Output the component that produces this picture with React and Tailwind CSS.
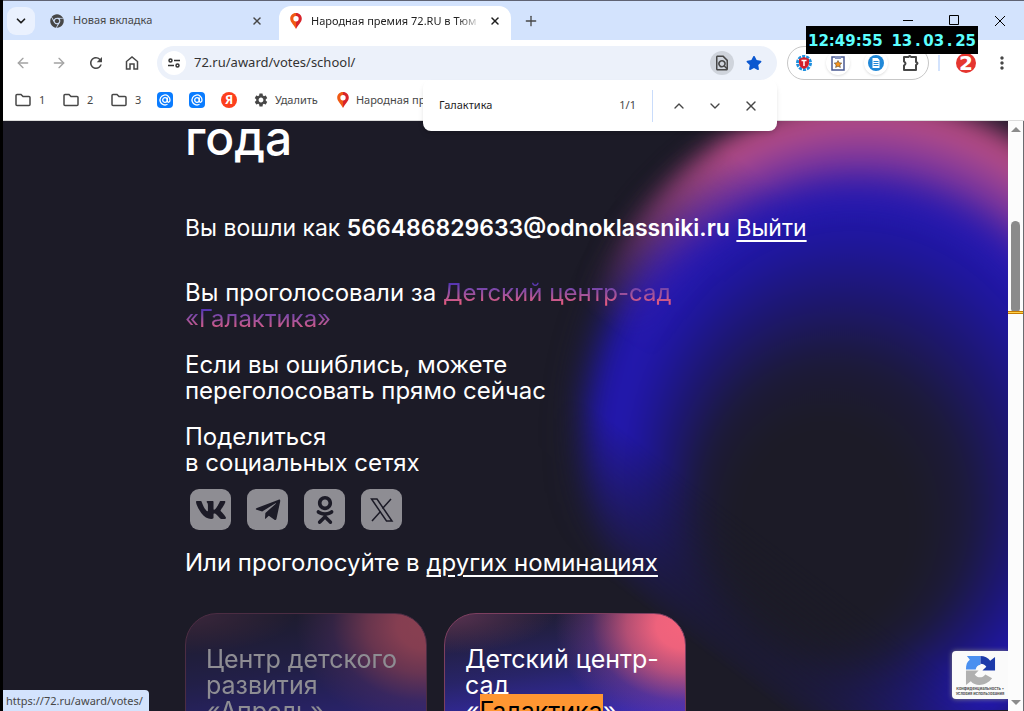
import React from "react";
import { ArrowLeft, ArrowRight, ChevronDown, ChevronUp, Plus, X } from "lucide-react";
import { FaOdnoklassniki, FaTelegramPlane, FaVk, FaChrome, FaStar } from "react-icons/fa";
import { MdSettings, MdOutlineFindInPage, MdMoreVert, MdRefresh } from "react-icons/md";

const PinIcon = () => (
    <svg viewBox="0 0 14 18" className="h-4 w-[14px] shrink-0">
        <path d="M7 0C3 0 .5 2.900.5 6.500c0 4 4 6.500 6.500 11.500z" fill="#f05a14" />
        <path d="M7 0c4 0 6.500 2.900 6.500 6.500 0 4-4 6.500-6.500 11.500z" fill="#d8232a" />
        <circle cx="7" cy="6.500" r="3" fill="#fff" />
    </svg>
);

const TabStrip = () => (
    <div className="flex h-10 shrink-0 items-center border-t border-[#5f6373] bg-[#d3e3fd] pl-1">
        <button aria-label="Поиск вкладок" className="flex size-7 items-center justify-center rounded-[9px] bg-[#eaf1fe]">
            <ChevronDown size={14} strokeWidth={3} />
        </button>
        <div className="ml-[15px] flex h-full w-[229px] items-center gap-[9px] text-[#474747]">
            <FaChrome size={14} className="shrink-0" />
            <span className="flex-1">Новая вкладка</span>
            <button aria-label="Закрыть вкладку" className="mr-4">
                <X size={12} strokeWidth={3} />
            </button>
        </div>
        <div className="mt-[5px] flex h-[34px] w-[232px] items-center gap-2 rounded-t-xl bg-white pb-1 pl-[10px] pr-2">
            <PinIcon />
            <span className="min-w-0 flex-1 overflow-hidden whitespace-nowrap bg-linear-to-r from-[#1f1f1f] from-85% to-white bg-clip-text text-transparent">
                Народная премия 72.RU в Тюм
            </span>
            <button aria-label="Закрыть вкладку" className="mr-0.5">
                <X size={12} strokeWidth={3} />
            </button>
        </div>
        <button aria-label="Новая вкладка" className="ml-3 text-[#474747]">
            <Plus size={16} />
        </button>
        <div className="ml-auto flex gap-[34px] pr-[17px]">
            <button aria-label="Свернуть">
                <svg width="12" height="12" stroke="#000"><path d="M0 5.500h10" /></svg>
            </button>
            <button aria-label="Развернуть">
                <svg width="12" height="12" stroke="#000" fill="none"><path d="M.5.500h9v9h-9z" /></svg>
            </button>
            <button aria-label="Закрыть">
                <svg width="12" height="12" stroke="#000"><path d="M0 1l10 10M10 1L0 11" /></svg>
            </button>
        </div>
    </div>
);

const Extensions = () => (
    <div className="flex h-[34px] w-[142px] shrink-0 items-center justify-between rounded-full border border-[#c7c7c7] px-2">
        <button aria-label="Блокировщик">
            <svg viewBox="0 0 16 16" className="size-4">
                <circle cx="8" cy="8" r="6.500" fill="none" stroke="#1d90e0" strokeWidth="3" strokeDasharray="3 1" />
                <path d="M8 2l5 2v4c0 3-2 5-5 6-3-1-5-3-5-6V4z" fill="#d3202c" />
                <path d="M5.500 5.500h5M8 5.500V11" stroke="#fff" strokeWidth="1.500" />
            </svg>
        </button>
        <button aria-label="Буфер закладок" className="flex size-6 items-center justify-center rounded-full bg-white shadow">
            <svg viewBox="0 0 16 16" className="size-4">
                <path d="M2 2h12v13H2z" fill="#fff" stroke="#4a5a92" strokeWidth="1.500" />
                <path d="M5 1h6v3H5z" fill="#8593bd" />
                <path d="M8 5.500l1.200 2.300 2.600.3-1.900 1.800.5 2.600L8 11.300l-2.400 1.200.5-2.600-1.900-1.800 2.600-.3z" fill="#f7941d" stroke="#333" strokeWidth=".5" />
            </svg>
        </button>
        <button aria-label="Документы" className="flex size-6 items-center justify-center rounded-full bg-white shadow">
            <svg viewBox="0 0 16 16" className="size-4">
                <circle cx="8" cy="8" r="8" fill="#2088d8" />
                <path d="M4.500 3h5l2 2v8h-7z" fill="#fff" />
                <path d="M5.500 6.500h5M5.500 8.500h5M5.500 10.500h5" stroke="#2088d8" />
            </svg>
        </button>
        <button aria-label="Расширения" className="text-[#474747]">
            <svg viewBox="0 0 18 18" className="size-[18px]" fill="none" stroke="currentColor" strokeWidth="2">
                <path d="M2 3h4.500q1-2 2.500 0h5v5q3 1 0 3v5H2v-4.500q3-2 0-4z" strokeLinejoin="round" />
            </svg>
        </button>
    </div>
);

const Toolbar = () => (
    <div className="flex h-[46px] shrink-0 items-center pl-3 pr-3 text-[#474747]">
        <div className="flex items-center gap-5">
            <button aria-label="Назад" className="text-[#a3a3a3]"><ArrowLeft size={16} /></button>
            <button aria-label="Вперёд" className="text-[#a3a3a3]"><ArrowRight size={16} /></button>
            <button aria-label="Обновить"><MdRefresh size={18} /></button>
            <button aria-label="Главная">
                <svg width="14" height="16" fill="none" stroke="currentColor" strokeWidth="1.500">
                    <path d="M1.500 14V6.500L7 2l5.500 4.500V14H9V9H5v5z" />
                </svg>
            </button>
        </div>
        <div className="ml-[18px] flex h-[34px] flex-1 items-center rounded-full bg-[#ecf1fa] pl-[5px] pr-[15px]">
            <button aria-label="Сведения о сайте" className="flex size-6 shrink-0 items-center justify-center rounded-full bg-white">
                <svg width="12" height="10" fill="none" stroke="#333" strokeWidth="1.500">
                    <circle cx="2.500" cy="2.500" r="1.500" />
                    <path d="M6 2.500h6M0 7.500h6" />
                    <circle cx="9.500" cy="7.500" r="1.500" />
                </svg>
            </button>
            <input
                aria-label="Адресная строка"
                defaultValue="72.ru/award/votes/school/"
                className="ml-2 min-w-0 flex-1 bg-transparent text-[13px] text-[#333] outline-none"
            />
            <button aria-label="Найти на странице" className="flex size-6 items-center justify-center rounded-full bg-[#cfd4dc]">
                <MdOutlineFindInPage size={18} />
            </button>
            <button aria-label="Закладка" className="ml-3 text-[#0b57d0]"><FaStar size={16} /></button>
        </div>
        <div className="ml-[10px] flex items-center">
            <Extensions />
            <div className="ml-[9px] h-4 w-0.5 bg-[#d3e3fd]" />
            <button aria-label="Профиль" className="ml-4 flex size-5 items-center justify-center rounded-full bg-[#e5352f] font-['DejaVu_Sans'] text-xl font-bold leading-5 text-white">
                2
            </button>
            <button aria-label="Меню" className="ml-4"><MdMoreVert size={20} /></button>
        </div>
    </div>
);

const Bookmarks = () => (
    <nav className="flex h-[35px] shrink-0 items-center border-b border-[#dcdcdc] pb-1.5 pl-3 text-[#474747]">
        {["1", "2", "3"].map((name) => (
            <a key={name} href="#" className="flex w-12 items-center gap-2">
                <svg width="16" height="14" fill="none" stroke="currentColor" strokeWidth="1.500">
                    <path d="M1 11.500V2.500q0-1 1-1h4l2 2h6q1 0 1 1v7q0 1-1 1H2q-1 0-1-1z" />
                </svg>
                {name}
            </a>
        ))}
        <div className="-ml-0.5 flex gap-4">
            {["mail-1", "mail-2"].map((id) => (
                <a key={id} href="#" aria-label="Почта" className="size-4">
                    <svg viewBox="0 0 16 16" fill="none" stroke="#fff">
                        <rect width="16" height="16" rx="4" fill="#0a7cff" stroke="none" />
                        <circle cx="8" cy="8" r="2.300" strokeWidth="1.300" />
                        <path d="M10.300 5.500V9q.2 1.500 1.500 1.200 1.200-.5 1.200-2.200a5 5 0 1 0-2.500 4.300" strokeWidth="1.300" />
                    </svg>
                </a>
            ))}
            <a href="#" className="flex size-4 items-center justify-center rounded-full bg-[#fc3f1d] text-xs font-bold text-white">Я</a>
        </div>
        <a href="#" className="ml-4 flex items-center gap-[6px]"><MdSettings size={16} />Удалить</a>
        <a href="#" className="ml-[18px] flex items-center gap-[6px]"><PinIcon />Народная пр</a>
    </nav>
);

const FindBar = () => (
    <div className="absolute right-[247px] top-20 z-10 flex h-[51px] w-[354px] items-center rounded-lg bg-white pl-4 pr-[18px] shadow-md">
        <input aria-label="Найти" defaultValue="Галактика" className="min-w-0 flex-1 outline-none" />
        <span className="text-[#474747]">1/1</span>
        <div className="ml-4 h-8 w-px bg-[#c9dcfb]" />
        <div className="ml-[18px] flex gap-5 text-[#474747]">
            <button aria-label="Назад"><ChevronUp size={16} /></button>
            <button aria-label="Далее"><ChevronDown size={16} /></button>
            <button aria-label="Закрыть поиск"><X size={16} /></button>
        </div>
    </div>
);

const Clock = () => (
    <div className="absolute right-[46px] top-[26px] z-10 flex h-7 w-[172px] items-center justify-between bg-black px-0.5 pt-0.5 font-['DejaVu_Sans',sans-serif] text-[15px] font-bold text-[#5cffff]">
        <span>12:49:55</span>
        <span>
            13<span className="inline-block w-[11px] text-center">.</span>03
            <span className="inline-block w-[11px] text-center">.</span>25
        </span>
    </div>
);

const Glow = () => (
    <svg className="absolute right-0 top-0 h-[589px] w-[508px]" viewBox="500 122 508 589">
        <defs>
            <radialGradient id="ring" gradientUnits="userSpaceOnUse" cx="0" cy="0" r="1" fx="-.21" fy=".36" gradientTransform="translate(870 440) scale(312 352)">
                <stop offset=".3" stopColor="#1c1b27" />
                <stop offset=".42" stopColor="#1c1a38" />
                <stop offset=".56" stopColor="#1d1770" />
                <stop offset=".68" stopColor="#1f179c" />
                <stop offset=".77" stopColor="#2418b0" />
                <stop offset=".85" stopColor="#2017a4" />
                <stop offset="1" stopColor="#1c1b40" stopOpacity="0" />
            </radialGradient>
            <radialGradient id="rim" gradientUnits="userSpaceOnUse" cx="0" cy="0" r="1" fx="-.21" fy=".36" gradientTransform="translate(870 440) scale(312 352)">
                <stop offset=".74" stopColor="#2819b0" stopOpacity="0" />
                <stop offset=".84" stopColor="#75339f" />
                <stop offset=".92" stopColor="#ac4a8a" />
                <stop offset=".96" stopColor="#b84a7a" />
                <stop offset="1" stopColor="#6b2f55" stopOpacity="0" />
            </radialGradient>
            <linearGradient id="fade" gradientUnits="userSpaceOnUse" x1="660" y1="620" x2="738" y2="516">
                <stop stopColor="#000" />
                <stop offset="1" stopColor="#fff" />
            </linearGradient>
            <linearGradient id="rimFade" gradientUnits="userSpaceOnUse" x1="610" y1="330" x2="740" y2="160">
                <stop stopColor="#000" />
                <stop offset="1" stopColor="#fff" />
            </linearGradient>
            <mask id="ringMask" maskUnits="userSpaceOnUse" x="500" y="0" width="800" height="900">
                <path d="M500 0h800v900H500z" fill="url(#fade)" />
            </mask>
            <mask id="rimMask" maskUnits="userSpaceOnUse" x="500" y="0" width="800" height="900">
                <path d="M500 0h800v900H500z" fill="url(#rimFade)" />
            </mask>
            <filter id="soft" filterUnits="userSpaceOnUse" x="450" y="0" width="900" height="950" colorInterpolationFilters="sRGB">
                <feGaussianBlur stdDeviation="11" />
            </filter>
        </defs>
        <g mask="url(#ringMask)">
            <ellipse cx="870" cy="440" rx="312" ry="352" fill="url(#ring)" filter="url(#soft)" />
        </g>
        <g mask="url(#rimMask)">
            <ellipse cx="870" cy="440" rx="312" ry="352" fill="url(#rim)" filter="url(#soft)" />
        </g>
    </svg>
);

const SHARE = [
    { name: "ВКонтакте", icon: <FaVk size={32} /> },
    { name: "Телеграм", icon: <FaTelegramPlane size={28} /> },
    { name: "Одноклассники", icon: <FaOdnoklassniki size={28} /> },
    {
        name: "X",
        icon: (
            <svg width="24" height="24" fill="none" stroke="currentColor">
                <path d="M1.500 1h5.500l15 22h-5.500z" strokeWidth="1.500" />
                <path d="M21 1l-8.500 9.500M10.500 13.500L2 23" strokeWidth="1.500" />
            </svg>
        ),
    },
];

const accent = "bg-linear-to-b from-[#4526b8] from-10% to-[#e85a7d] to-90% bg-clip-text text-transparent";

const Card = ({ children, dim }) => (
    <a
        href="#"
        className={`relative h-[300px] w-[242px] overflow-hidden rounded-[32px] border border-[#7d3f60] bg-[radial-gradient(ellipse_130px_105px_at_100%_4%,#f4647c_0%,#ee627c_22%,rgb(215_90_125_/_0.8)_45%,rgb(150_70_150_/_0.35)_72%,transparent_100%),radial-gradient(ellipse_110px_40px_at_0%_0%,#5b3350_0%,transparent_100%),linear-gradient(172deg,#211e38_16px,#282468_70px,#3a2cc0_135px)] px-5 pt-8 text-[25px] leading-[26px] ${dim ? "opacity-50" : ""}`}
    >
        {children}
    </a>
);

const Scrollbar = () => (
    <div className="flex w-4 shrink-0 flex-col items-center border-r border-[#6b6b70] bg-[#fcfcfc]">
        <svg width="10" height="16" fill="#8b8b8b"><path d="M0 11h10L5 6z" /></svg>
        <div className="mt-[84px] h-[92px] w-[9px] rounded-full bg-[#8b8b8b]" />
        <div className="-mt-0.5 h-[3px] w-full border-y border-[#c77c00] bg-[#ffd24a]" />
        <svg width="10" height="16" fill="#8b8b8b" className="mt-auto"><path d="M0 5h10l-5 5z" /></svg>
    </div>
);

const Recaptcha = () => (
    <div className="absolute bottom-3 right-0 flex h-12 w-14 flex-col items-center rounded-l-sm bg-[#fafafa] pt-1 shadow-[0_0_5px_gray]">
        <svg viewBox="0 0 32 32" className="size-[31px] shrink-0">
            <path d="M16 1v9a6 6 0 0 0-5 5H1C1 10 2 7 5 5L2 1z" fill="#4a90f0" />
            <path d="M16 1c4 0 8 2 10 5l5-4v14H18l4-4q-2-3-6-3z" fill="#1c3aa9" />
            <path d="M1 16h13l-4 4c3 4 8 4 11 0l7 4c-6 8-17 9-22 3l-5 4z" fill="#b0b0b0" />
        </svg>
        <span className="text-center text-[4px] font-bold leading-[5px] text-[#555]">
            Конфиденциальность •<br />Условия использования
        </span>
    </div>
);

const Page = () => (
    <main className="relative min-w-0 flex-1 overflow-hidden bg-[#1c1b27] font-[Inter,sans-serif] text-2xl leading-[26px] text-white">
        <Glow />
        <div className="relative pl-[182px]">
            <h1 className="-mt-[9px] text-[48px] font-medium leading-[52px]">года</h1>
            <p className="mt-[51px] text-[23px]">
                Вы вошли как <b className="font-semibold">566486829633@odnoklassniki.ru</b>{" "}
                <a href="#" className="underline underline-offset-4">Выйти</a>
            </p>
            <p className="mt-[39px]">
                Вы проголосовали за <span className={accent}>Детский центр-сад</span>
                <br />
                <span className={accent}>«Галактика»</span>
            </p>
            <p className="mt-5">
                Если вы ошиблись, можете
                <br />
                переголосовать прямо сейчас
            </p>
            <p className="mt-5">
                Поделиться
                <br />
                в социальных сетях
            </p>
            <div className="mt-[13px] flex gap-4 pl-[5px]">
                {SHARE.map(({ name, icon }) => (
                    <button key={name} aria-label={name} className="flex size-[41px] items-center justify-center rounded-[9px] bg-[#8e8d93] text-[#1c1b27]">
                        {icon}
                    </button>
                ))}
            </div>
            <p className="mt-5">
                Или проголосуйте в <a href="#" className="underline underline-offset-4">других номинациях</a>
            </p>
            <div className="mt-[37px] flex gap-[17px]">
                <Card dim>
                    Центр детского
                    <br />
                    развития
                    <br />
                    «Апрель»
                </Card>
                <Card>
                    Детский центр-
                    <br />
                    сад
                    <br />
                    «<mark className="bg-[#ff9632] pt-0.5 text-black">Галактика</mark>»
                </Card>
            </div>
        </div>
        <Recaptcha />
        <div className="absolute bottom-0 left-0 flex h-[21px] items-center rounded-tr bg-[#d3e3fd] pl-[3px] pr-1.5 font-['Noto_Sans',sans-serif] text-[11px] text-[#474747]">
            https://72.ru/award/votes/
        </div>
    </main>
);

export default function App() {
    return (
        <div className="relative flex h-screen flex-col overflow-hidden border-l-[3px] border-black bg-white font-['Noto_Sans',sans-serif] text-[11px] text-[#1f1f1f]">
            <TabStrip />
            <Toolbar />
            <Bookmarks />
            <FindBar />
            <Clock />
            <div className="flex min-h-0 flex-1">
                <Page />
                <Scrollbar />
            </div>
        </div>
    );
}
